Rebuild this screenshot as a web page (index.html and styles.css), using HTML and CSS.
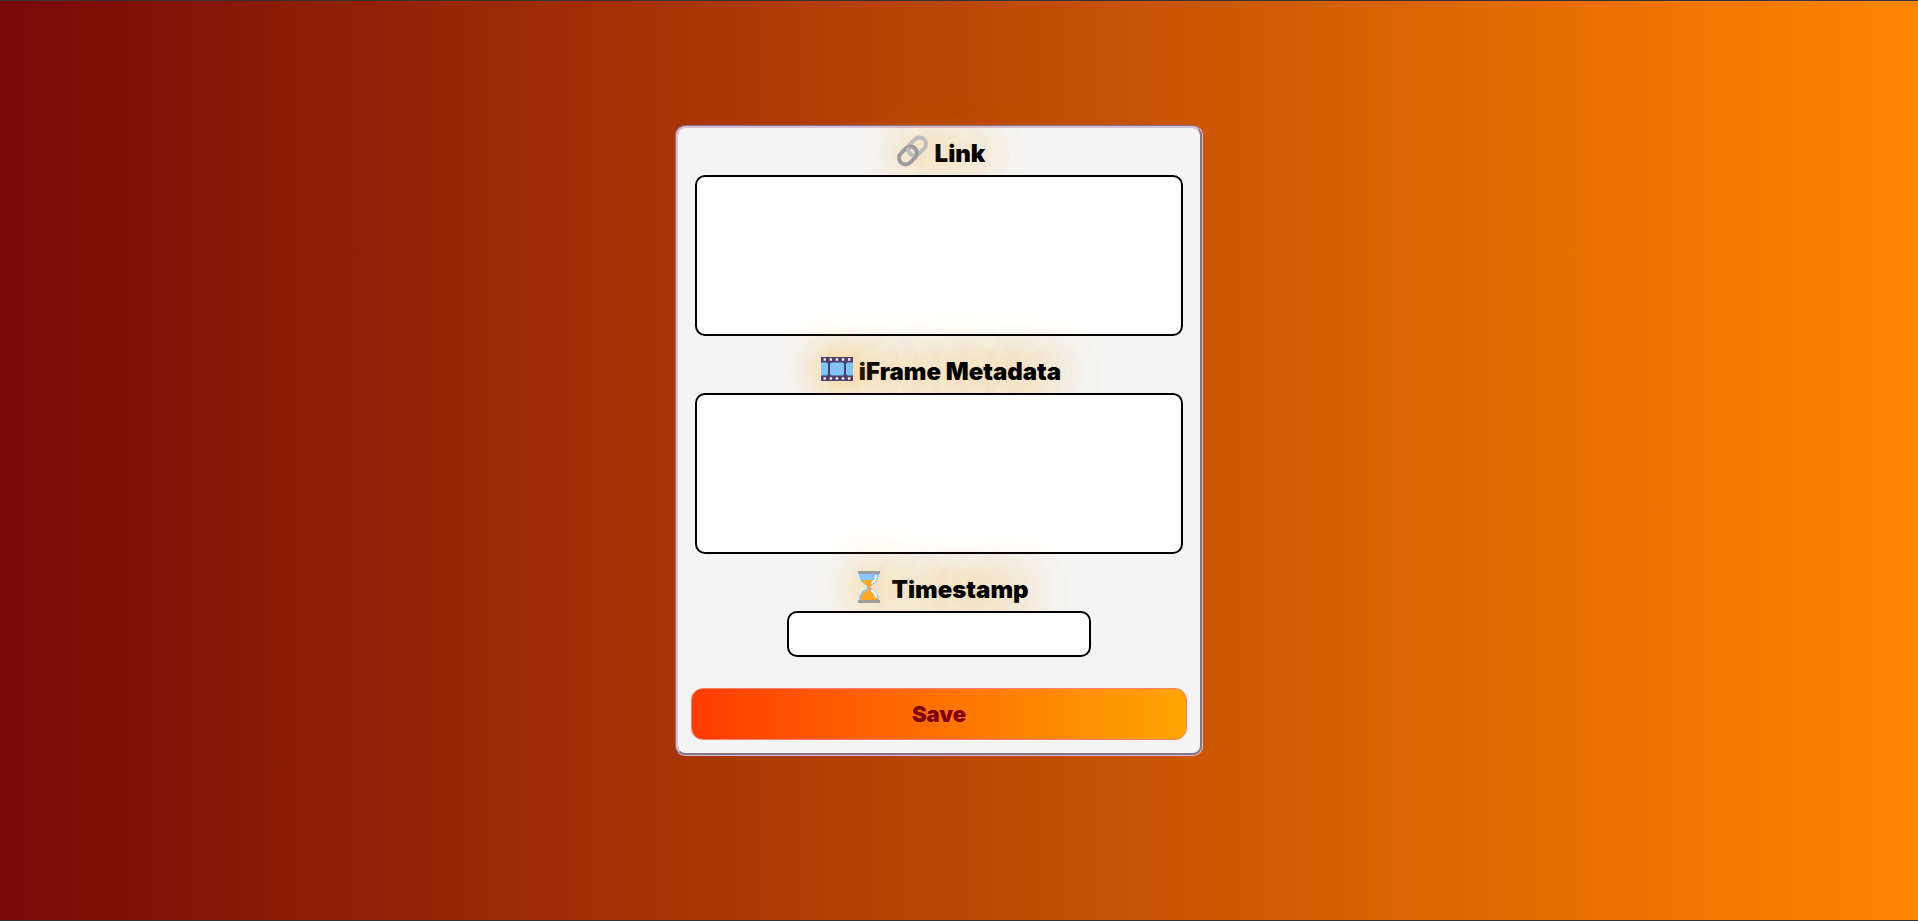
FILE: index.html
```html
<!DOCTYPE html>
<html lang="en">
<head>
<meta charset="utf-8">
<meta name="viewport" content="width=device-width, initial-scale=1">
<title>Save link</title>
<link rel="stylesheet" href="styles.css">
</head>
<body>
<form class="card">
  <div class="field">
    <label class="label" for="link">
      <svg class="icon" viewBox="0 0 32 32" fill="none" stroke-width="4" aria-hidden="true">
        <rect class="chain-back" x="10" y="5" width="20" height="13" rx="6.500" transform="rotate(-45 20 11.500)"/>
        <rect class="chain-front" x="1" y="14" width="20" height="13" rx="6.500" transform="rotate(-45 11 20.500)"/>
        <path class="chain-back" d="M12 12.500C10.500 16 12.500 19.500 16 20"/>
      </svg>
      <span class="label-text">Link</span>
    </label>
    <textarea class="box" id="link"></textarea>
  </div>
  <div class="field">
    <label class="label" for="metadata">
      <svg class="icon" viewBox="0 0 32 32" aria-hidden="true">
        <path fill="#4a4070" d="M0 4h32v24H0z"/>
        <path fill="#82c4fa" d="M0 9.500h5q2 0 2 2v9q0 2-2 2H0zM32 9.500h-5q-2 0-2 2v9q0 2 2 2h5z"/>
        <rect x="9" y="9.500" width="14" height="13" rx="2" fill="#82c4fa"/>
        <path stroke="#f7e4dc" stroke-width="2.500" stroke-dasharray="2.500 3.600" d="M2.500 6.500h29M2.500 25.500h29"/>
      </svg>
      <span class="label-text">iFrame Metadata</span>
    </label>
    <textarea class="box" id="metadata"></textarea>
  </div>
  <div class="field">
    <label class="label" for="timestamp">
      <svg class="icon" viewBox="0 0 32 32" aria-hidden="true">
        <path fill="#86c8fa" d="M6 2h20c0 7-3 10-8 13v2c5 3 8 6 8 13H6c0-7 3-10 8-13v-2C9 12 6 9 6 2z"/>
        <path fill="#ffa726" d="M9 9h13c0 3-2 4-5 6v4c4 2 7 4 8 11H7c1-7 4-9 8-11v-4c-3-2-5-3-6-6z"/>
        <path fill="none" stroke="#fff" stroke-width="2" stroke-linecap="round" d="M23 5c0 3-1 5-4 7M19 20c2 1 4 3 4 6"/>
        <path fill="#9e9e9e" d="M5 0h22v3H5zM5 29h22v3H5z"/>
      </svg>
      <span class="label-text">Timestamp</span>
    </label>
    <input class="box box-small" id="timestamp" type="text">
  </div>
  <button class="save" type="button">Save</button>
</form>
</body>
</html>
```
FILE: styles.css
```css
* { box-sizing: border-box; }

body {
  margin: 0;
  min-height: 100vh;
  display: flex;
  align-items: center;
  justify-content: center;
  padding: 20px 60px 60px 20px;
  border: solid #333;
  border-width: 1px 0;
  background: linear-gradient(90deg, #780808, #ff8500);
  font-family: Inter, "Liberation Sans", sans-serif;
  font-weight: 900;
}

.card {
  width: 100%;
  max-width: 528px;
  padding: 4px 13px 13px;
  display: flex;
  flex-direction: column;
  gap: 14px;
  border: 3px groove thistle;
  border-radius: 10px;
  background: #f4f4f4;
}

.field {
  display: flex;
  flex-direction: column;
  align-items: center;
}

.label {
  position: relative;
  display: flex;
  align-items: center;
  gap: 6px;
  height: 43px;
  padding-left: 4px;
  font-size: 24px;
  line-height: 36px;
  color: #000;
  text-shadow: 0 0 50px orange, 0 0 50px rgb(255 165 0 / 40%);
}

.icon {
  width: 32px;
  height: 32px;
  margin-bottom: 5px;
  overflow: visible;
  filter: drop-shadow(0 0 20px orange);
}

.chain-back { stroke: #bdbdbd; }
.chain-front { stroke: #9b9b9b; }

.box {
  position: relative;
  display: block;
  width: calc(100% - 8px);
  height: 161px;
  margin: 0;
  padding: 8px;
  border: 2px solid #000;
  border-radius: 10px;
  background: #fff;
  font: inherit;
  font-size: 16px;
  outline: none;
  resize: none;
}

.box-small {
  width: 304px;
  max-width: 100%;
  height: 46px;
}

.save {
  height: 52px;
  margin-top: 17px;
  padding: 0;
  border: 1px solid salmon;
  border-radius: 12px;
  background: linear-gradient(90deg, #ff3c00, orange);
  color: maroon;
  font: inherit;
  font-size: 22px;
}
```
